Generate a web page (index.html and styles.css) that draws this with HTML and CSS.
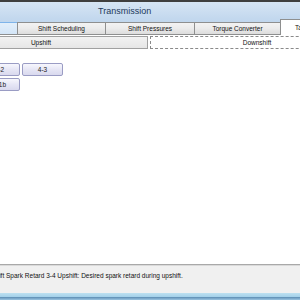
FILE: index.html
```html
<!DOCTYPE html>
<html>
<head>
<meta charset="utf-8">
<link rel="stylesheet" href="styles.css">
</head>
<body>
<div class="win">
  <div class="header">
    <div class="title">Transmission</div>
    <div class="tabs">
      <div class="tab tab-hover">Shift Speeds</div>
      <div class="tab">Shift Scheduling</div>
      <div class="tab tab-wide">Shift Pressures</div>
      <div class="tab tab-tc">Torque Converter</div>
      <div class="tab tab-sel">Tap Shift Torque</div>
    </div>
  </div>
  <div class="subtabs">
    <div class="subtab">Upshift</div>
    <div class="subtab subtab-sel">Downshift</div>
  </div>
  <div class="content">
    <div class="btns">
      <div class="btn">1-2</div>
      <div class="btn">4-3</div>
      <div class="btn">2-1b</div>
    </div>
  </div>
  <div class="status">Upshift Spark Retard 3-4 Upshift: Desired spark retard during upshift.</div>
  <div class="frame"></div>
</div>
</body>
</html>
```
FILE: styles.css
```css
html, body {
  margin: 0;
  padding: 0;
  width: 300px;
  height: 300px;
  overflow: hidden;
  background: #ffffff;
  font-family: "Liberation Sans", Arial, sans-serif;
}
.win {
  display: flex;
  flex-direction: column;
  height: 300px;
}
.header {
  border-top: 2px solid #3f3f3f;
  background: linear-gradient(#d6e5f4, #c3d8ee 50%, #b9d1ea);
  height: 33px;
  display: flex;
  flex-direction: column;
}
.title {
  height: 17px;
  line-height: 19px;
  font-size: 9px;
  color: #1e395b;
  padding-left: 98px;
}
.tabs {
  display: flex;
  align-items: flex-end;
  height: 16px;
  margin-left: -71px;
  border-bottom: 1px solid #8e8f8f;
  box-sizing: border-box;
}
.tab {
  flex: none;
  box-sizing: border-box;
  width: 89px;
  height: 12px;
  line-height: 11px;
  font-size: 6.5px;
  color: #111;
  text-align: center;
  white-space: nowrap;
  background: linear-gradient(#f3f3f3, #ebebeb 50%, #dddddd);
  border: 1px solid #8e8f8f;
  border-bottom: none;
  margin-right: -1px;
}
.tab-hover {
  background: linear-gradient(#e3effa, #d3e5f7);
  border-color: #7eb4ea;
}
.tab-wide { width: 90px; }
.tab-tc { width: 87px; }
.tab-sel {
  width: 100px;
  height: 16px;
  line-height: 15px;
  text-align: left;
  padding-left: 14px;
  background: #ffffff;
  margin-bottom: -1px;
}
.subtabs {
  display: flex;
  margin-left: -66px;
  margin-top: 1px;
  height: 13px;
}
.subtab {
  flex: none;
  box-sizing: border-box;
  width: 214px;
  height: 13px;
  line-height: 11px;
  font-size: 6.5px;
  color: #111;
  text-align: center;
  background: linear-gradient(#f2f2f2, #e6e6e6);
  border: 1px solid #a0a0a0;
  margin-right: 2px;
}
.subtab-sel {
  background: #ffffff;
  border: 1px dashed #8a8a8a;
}
.content {
  flex: 1;
  background: #ffffff;
  padding-top: 14px;
}
.btns {
  display: grid;
  grid-template-columns: 41px 41px;
  gap: 2px 2px;
  margin-left: -21px;
}
.btn {
  box-sizing: border-box;
  height: 13px;
  line-height: 11px;
  font-size: 6.5px;
  color: #222;
  text-align: center;
  border: 1px solid #9a9cc4;
  border-radius: 2px;
  background: linear-gradient(#f7f7fd, #e6e6f5 50%, #d9d9ee);
}
.status {
  height: 29px;
  box-sizing: border-box;
  border-top: 1px solid #a9a9a9;
  box-shadow: inset 0 1px 0 #dadada;
  background: #f0f0f0;
  font-size: 6.5px;
  color: #111;
  padding-top: 7px;
  margin-left: -16px;
  white-space: nowrap;
}
.frame {
  height: 7px;
  background: linear-gradient(#bde0f0, #a6d2ea 50%, #5f8fb5 60%, #9cc6e2);
}
```
